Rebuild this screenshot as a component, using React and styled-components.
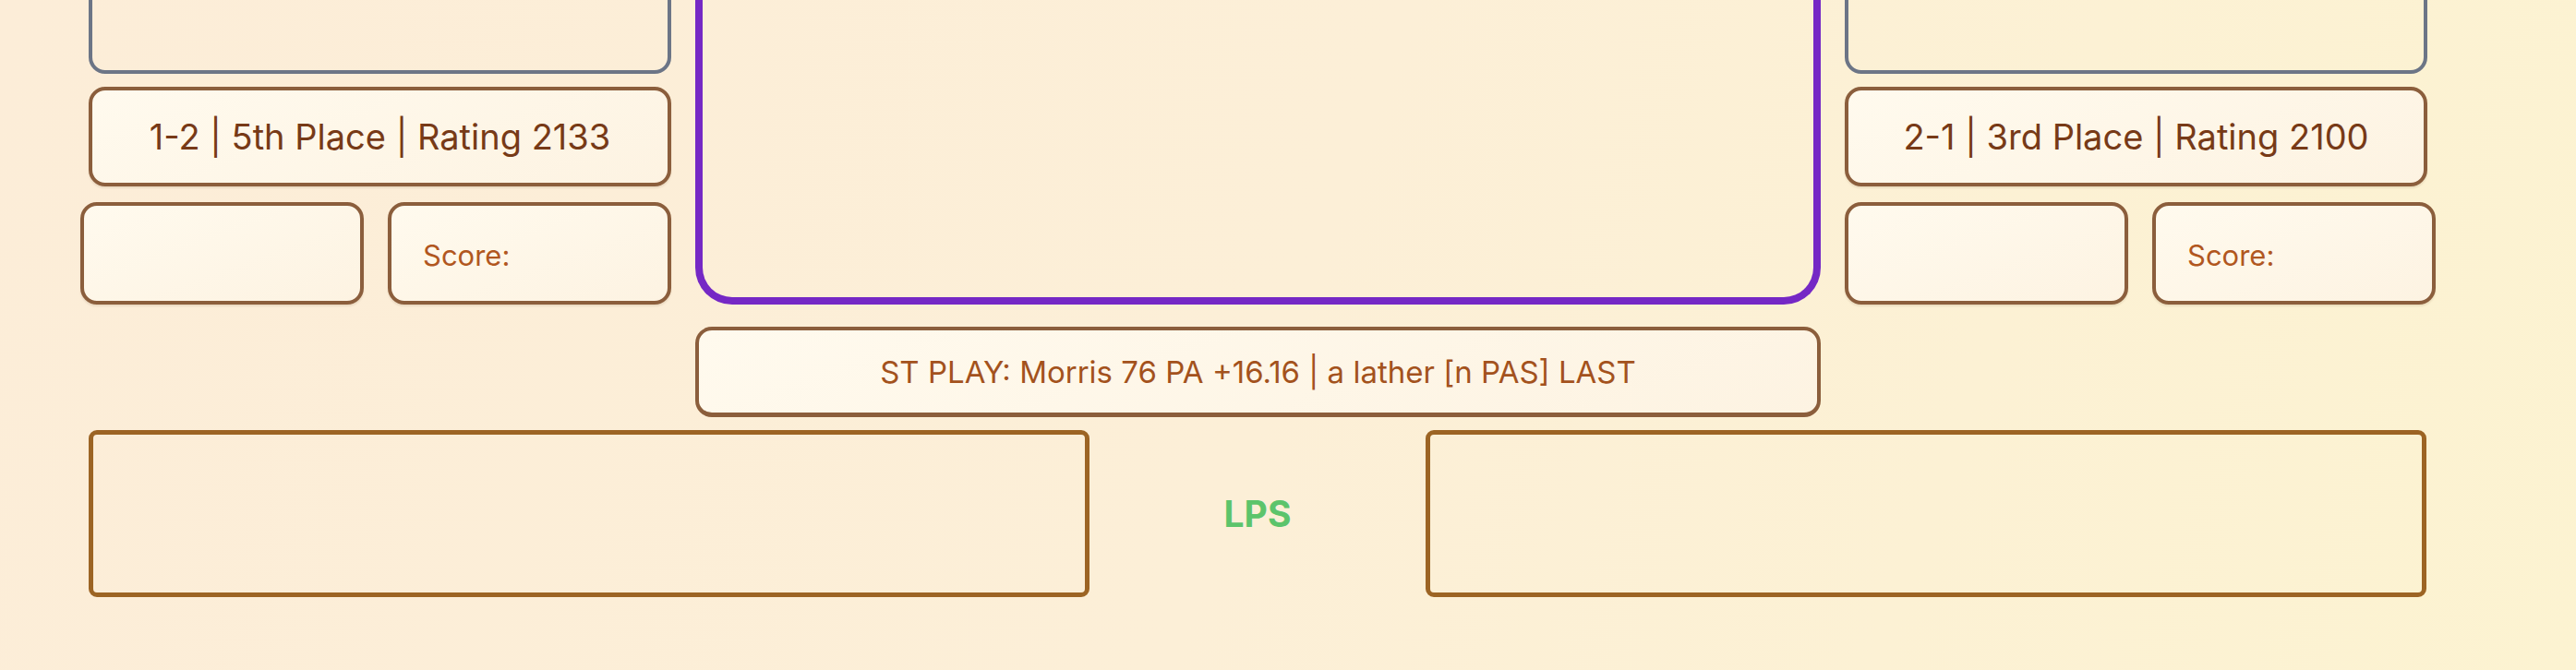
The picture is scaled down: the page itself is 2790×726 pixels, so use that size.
import React from "react";
import styled, { createGlobalStyle } from "styled-components";

const GlobalStyle = createGlobalStyle`
  html, body {
    margin: 0;
    padding: 0;
    height: 100%;
    overflow: hidden;
  }
  body {
    background: linear-gradient(110deg, #fcedd8 0%, #fcefd7 50%, #fcf3d1 100%);
    font-family: Inter, "Noto Sans", "Liberation Sans", sans-serif;
  }
`;

const StyledPage = styled.div`
  width: 2532px;
  padding-left: 96px;
  margin-top: -120px;
  display: flex;
  flex-direction: column;
`;

const StyledBoard = styled.div`
  display: grid;
  grid-template-columns: 631px 1219px 631px;
  column-gap: 26px;
  row-gap: 24px;
`;

const StyledSide = styled.div`
  display: flex;
  flex-direction: column;
  align-items: ${(p) => (p.$mirror ? "flex-start" : "flex-end")};
`;

const StyledSeat = styled.div`
  width: 100%;
  height: 200px;
  box-sizing: border-box;
  border: 4px solid #6c7586;
  border-radius: 18px;
`;

const StyledRating = styled.div`
  width: 100%;
  height: 108px;
  margin-top: 14px;
  box-sizing: border-box;
  border: 4px solid #8b5e3c;
  border-radius: 18px;
  background: linear-gradient(160deg, #fffaee 0%, #fdf3e2 100%);
  box-shadow: 0 2px 2px rgba(110, 70, 30, 0.12);
  display: flex;
  align-items: center;
  justify-content: center;
  font-size: 38px;
  color: #773a17;
`;

const StyledMiniRow = styled.div`
  width: 640px;
  margin-top: 17px;
  display: grid;
  grid-template-columns: 1fr 1fr;
  gap: 26px;
`;

const StyledMini = styled.div`
  height: 111px;
  box-sizing: border-box;
  border: 4px solid #8b5e3c;
  border-radius: 18px;
  background: linear-gradient(160deg, #fffaee 0%, #fdf3e2 100%);
  box-shadow: 0 2px 2px rgba(110, 70, 30, 0.12);
  display: flex;
  align-items: center;
  padding: 4px 0 0 34px;
  font-size: 31px;
  color: #b1571f;
`;

const StyledArena = styled.div`
  height: 450px;
  box-sizing: border-box;
  border: 8px solid #7528c5;
  border-top: none;
  border-radius: 0 0 40px 40px;
`;

const StyledPlay = styled.div`
  grid-column: 2;
  height: 98px;
  box-sizing: border-box;
  border: 4px solid #8b5e3c;
  border-bottom-width: 5px;
  border-radius: 18px;
  background: linear-gradient(160deg, #fffaee 0%, #fdf3e2 100%);
  display: flex;
  align-items: center;
  justify-content: center;
  font-size: 33px;
  color: #a3521d;
`;

const StyledBench = styled.div`
  margin-top: 14px;
  display: grid;
  grid-template-columns: 1084px 1fr 1084px;
  align-items: center;
`;

const StyledTray = styled.div`
  height: 181px;
  box-sizing: border-box;
  border: 5px solid #9c6424;
  border-radius: 9px;
`;

const StyledLps = styled.div`
  text-align: center;
  font-size: 39px;
  font-weight: 700;
  color: #5cc46b;
`;

const PlayerSide = ({ record, mirror }) => (
  <StyledSide $mirror={mirror}>
    <StyledSeat />
    <StyledRating>{record}</StyledRating>
    <StyledMiniRow>
      <StyledMini />
      <StyledMini>Score:</StyledMini>
    </StyledMiniRow>
  </StyledSide>
);

const App = () => {
  return (
    <>
      <GlobalStyle />
      <StyledPage>
        <StyledBoard>
          <PlayerSide record="1-2 | 5th Place | Rating 2133" />
          <StyledArena />
          <PlayerSide record="2-1 | 3rd Place | Rating 2100" mirror />
          <StyledPlay>
            ST PLAY: Morris 76 PA +16.16 | a lather [n PAS] LAST
          </StyledPlay>
        </StyledBoard>
        <StyledBench>
          <StyledTray />
          <StyledLps>LPS</StyledLps>
          <StyledTray />
        </StyledBench>
      </StyledPage>
    </>
  );
};

export default App;
